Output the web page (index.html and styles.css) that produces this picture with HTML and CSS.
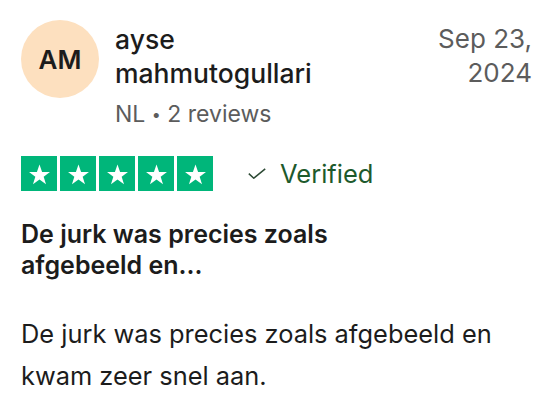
FILE: index.html
```html
<!DOCTYPE html>
<html lang="nl">
<head>
  <meta charset="UTF-8">
  <meta name="viewport" content="width=device-width, initial-scale=1.0">
  <title>Review</title>
  <link rel="stylesheet" href="styles.css">
</head>
<body>
  <article class="review">
    <header class="review-head">
      <div class="avatar">AM</div>
      <div class="consumer">
        <div class="name">ayse mahmutogullari</div>
        <div class="meta">NL <span class="dot">•</span> 2 reviews</div>
      </div>
      <time class="date">Sep 23,<br>2024</time>
    </header>

    <div class="rating-row">
      <div class="stars">
        <span class="star"><svg viewBox="0 0 24 24"><path d="M12 3.2l2.3 6.6h7l-5.6 4.1 2.1 6.7L12 16.5l-5.8 4.1 2.1-6.7-5.6-4.1h7z"/></svg></span>
        <span class="star"><svg viewBox="0 0 24 24"><path d="M12 3.2l2.3 6.6h7l-5.6 4.1 2.1 6.7L12 16.5l-5.8 4.1 2.1-6.7-5.6-4.1h7z"/></svg></span>
        <span class="star"><svg viewBox="0 0 24 24"><path d="M12 3.2l2.3 6.6h7l-5.6 4.1 2.1 6.7L12 16.5l-5.8 4.1 2.1-6.7-5.6-4.1h7z"/></svg></span>
        <span class="star"><svg viewBox="0 0 24 24"><path d="M12 3.2l2.3 6.6h7l-5.6 4.1 2.1 6.7L12 16.5l-5.8 4.1 2.1-6.7-5.6-4.1h7z"/></svg></span>
        <span class="star"><svg viewBox="0 0 24 24"><path d="M12 3.2l2.3 6.6h7l-5.6 4.1 2.1 6.7L12 16.5l-5.8 4.1 2.1-6.7-5.6-4.1h7z"/></svg></span>
      </div>
      <div class="verified">
        <svg class="check" viewBox="0 0 18 11"><path d="M0.8 5.6l5 4.6L17.2 0.8"/></svg>
        Verified
      </div>
    </div>

    <h2 class="title">De jurk was precies zoals afgebeeld en...</h2>
    <p class="text">De jurk was precies zoals afgebeeld en kwam zeer snel aan.</p>
  </article>
</body>
</html>
```

FILE: styles.css
```css
body {
  margin: 0;
  background: #fff;
  color: #1c1c1c;
  font-family: Inter, "Noto Sans", sans-serif;
}

.review {
  padding: 20px 25px 0 21px;
}

.review-head {
  display: flex;
  align-items: flex-start;
}

.avatar {
  flex: none;
  width: 78px;
  height: 78px;
  border-radius: 50%;
  background: #fde0bf;
  display: flex;
  align-items: center;
  justify-content: center;
  font-size: 26px;
  font-weight: 600;
  color: #1c1c1c;
}

.consumer {
  flex: 1;
  margin-left: 16px;
  margin-top: 2px;
}

.name {
  font-size: 26.5px;
  line-height: 34px;
  font-weight: 500;
  max-width: 220px;
}

.meta {
  margin-top: 10px;
  font-size: 23px;
  line-height: 28px;
  color: #5c5c5c;
}

.dot {
  font-size: 16px;
  vertical-align: 2px;
}

.date {
  text-align: right;
  font-size: 26px;
  line-height: 34px;
  color: #5c5c5c;
  margin-top: 2px;
}

.rating-row {
  display: flex;
  align-items: center;
  margin-top: 28px;
}

.stars {
  display: flex;
  gap: 3px;
}

.star {
  width: 36px;
  height: 35px;
  background: #00b67a;
  display: flex;
  align-items: center;
  justify-content: center;
}

.star svg {
  width: 27px;
  height: 27px;
  margin-top: 2px;
  fill: #fff;
}

.verified {
  display: flex;
  align-items: center;
  margin-left: 35px;
  font-size: 25.5px;
  color: #1d5a2c;
}

.check {
  width: 18px;
  height: 11px;
  margin-right: 14px;
  fill: none;
  stroke: #2d4a35;
  stroke-width: 1.5;
}

.title {
  margin: 28px 0 0;
  font-size: 25px;
  line-height: 31px;
  font-weight: 600;
  max-width: 340px;
}

.text {
  margin: 32px 0 0;
  font-size: 25.4px;
  line-height: 42px;
}
```
